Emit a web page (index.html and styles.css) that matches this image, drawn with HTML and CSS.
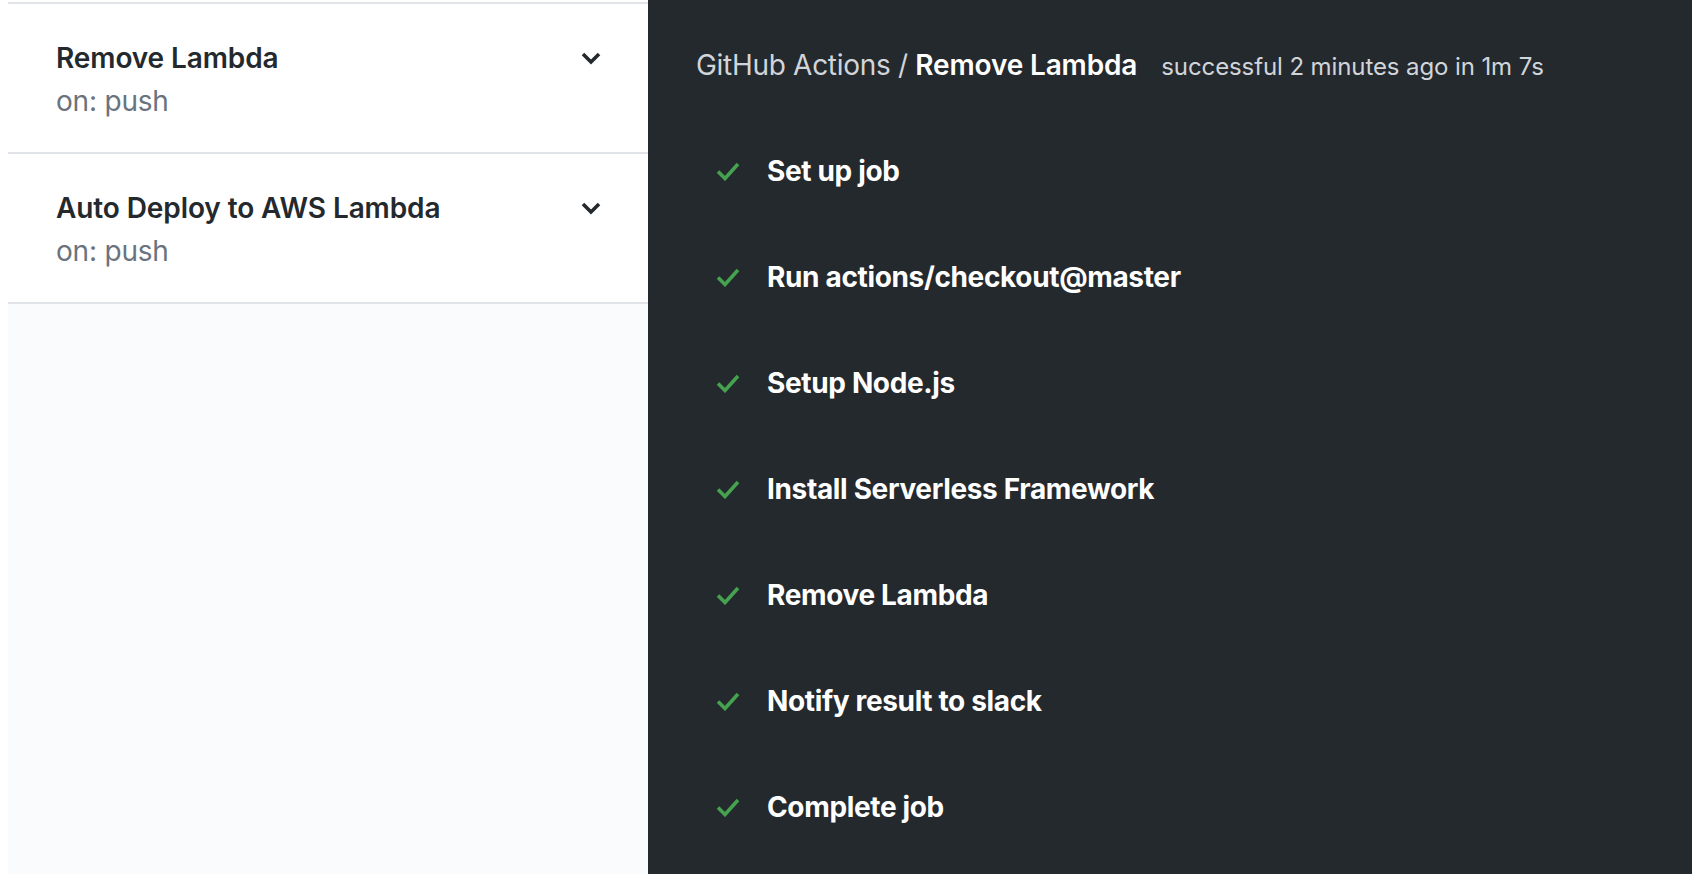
FILE: index.html
```html
<!DOCTYPE html>
<html lang="en">
<head>
<meta charset="utf-8">
<title>GitHub Actions / Remove Lambda</title>
<link rel="stylesheet" href="styles.css">
</head>
<body>
<div class="page">
  <div class="gutter"></div>
  <aside class="sidebar">
    <div class="workflow">
      <div class="wf-text">
        <div class="wf-title">Remove Lambda</div>
        <div class="wf-sub">on: push</div>
      </div>
      <svg class="chevron" viewBox="0 0 24 24" width="24" height="24"><path d="M4 8 L12 16 L20 8" fill="none" stroke="#24292e" stroke-width="3.6" stroke-linecap="butt" stroke-linejoin="miter"/></svg>
    </div>
    <div class="workflow">
      <div class="wf-text">
        <div class="wf-title">Auto Deploy to AWS Lambda</div>
        <div class="wf-sub">on: push</div>
      </div>
      <svg class="chevron" viewBox="0 0 24 24" width="24" height="24"><path d="M4 8 L12 16 L20 8" fill="none" stroke="#24292e" stroke-width="3.6" stroke-linecap="butt" stroke-linejoin="miter"/></svg>
    </div>
    <div class="sidebar-rest"></div>
  </aside>
  <main class="log">
    <div class="log-header">
      <span class="crumb">GitHub Actions / </span><span class="crumb-bold">Remove Lambda</span><span class="status">successful 2 minutes ago in 1m 7s</span>
    </div>
    <ul class="steps">
      <li class="step"><svg class="check" viewBox="0 0 24 20" width="24" height="20"><path d="M2 10.5 L9 17.5 L22 3" fill="none" stroke="#45a24f" stroke-width="3.6"/></svg><span class="step-name">Set up job</span></li>
      <li class="step"><svg class="check" viewBox="0 0 24 20" width="24" height="20"><path d="M2 10.5 L9 17.5 L22 3" fill="none" stroke="#45a24f" stroke-width="3.6"/></svg><span class="step-name">Run actions/checkout@master</span></li>
      <li class="step"><svg class="check" viewBox="0 0 24 20" width="24" height="20"><path d="M2 10.5 L9 17.5 L22 3" fill="none" stroke="#45a24f" stroke-width="3.6"/></svg><span class="step-name">Setup Node.js</span></li>
      <li class="step"><svg class="check" viewBox="0 0 24 20" width="24" height="20"><path d="M2 10.5 L9 17.5 L22 3" fill="none" stroke="#45a24f" stroke-width="3.6"/></svg><span class="step-name">Install Serverless Framework</span></li>
      <li class="step"><svg class="check" viewBox="0 0 24 20" width="24" height="20"><path d="M2 10.5 L9 17.5 L22 3" fill="none" stroke="#45a24f" stroke-width="3.6"/></svg><span class="step-name">Remove Lambda</span></li>
      <li class="step"><svg class="check" viewBox="0 0 24 20" width="24" height="20"><path d="M2 10.5 L9 17.5 L22 3" fill="none" stroke="#45a24f" stroke-width="3.6"/></svg><span class="step-name">Notify result to slack</span></li>
      <li class="step"><svg class="check" viewBox="0 0 24 20" width="24" height="20"><path d="M2 10.5 L9 17.5 L22 3" fill="none" stroke="#45a24f" stroke-width="3.6"/></svg><span class="step-name">Complete job</span></li>
    </ul>
  </main>
</div>
</body>
</html>
```

FILE: styles.css
```css
html, body {
  margin: 0;
  padding: 0;
  height: 100%;
  overflow: hidden;
}
body {
  font-family: Inter, "Noto Sans", "Liberation Sans", sans-serif;
  background: #ffffff;
}
.page {
  display: flex;
  height: 874px;
}
.gutter {
  width: 8px;
  flex: none;
  background: #ffffff;
}
.sidebar {
  width: 640px;
  flex: none;
  display: flex;
  flex-direction: column;
  padding-top: 2px;
  background: #ffffff;
}
.workflow {
  display: flex;
  align-items: flex-start;
  justify-content: space-between;
  border-top: 2px solid #e1e4e8;
  padding: 33px 45px 29px 48px;
}
.wf-title {
  font-size: 28px;
  line-height: 43px;
  font-weight: 600;
  color: #24292e;
  letter-spacing: -0.1px;
}
.wf-sub {
  font-size: 28px;
  line-height: 43px;
  color: #6a737d;
  letter-spacing: -0.2px;
}
.chevron {
  margin-top: 9px;
  width: 24px;
  height: 24px;
}
.sidebar-rest {
  flex: 1;
  border-top: 2px solid #e1e4e8;
  background: #fafbfc;
}
.log {
  flex: 1;
  background: #24292e;
  color: #ffffff;
  padding: 44px 48px 0 48px;
}
.log-header {
  font-size: 28px;
  line-height: 42px;
  white-space: nowrap;
}
.crumb {
  color: #d1d5da;
  letter-spacing: -0.3px;
}
.crumb-bold {
  font-weight: 600;
  color: #ffffff;
  letter-spacing: -0.15px;
}
.status {
  font-size: 24px;
  color: #d1d5da;
  margin-left: 24px;
  letter-spacing: -0.1px;
}
.steps {
  list-style: none;
  margin: 30px 0 0 0;
  padding: 0;
}
.step {
  height: 106px;
  display: flex;
  align-items: center;
  padding-left: 20px;
}
.check {
  flex: none;
  width: 24px;
  height: 20px;
  margin-right: 27px;
}
.step-name {
  font-size: 28px;
  font-weight: 700;
  color: #ffffff;
  letter-spacing: -0.35px;
}
```
